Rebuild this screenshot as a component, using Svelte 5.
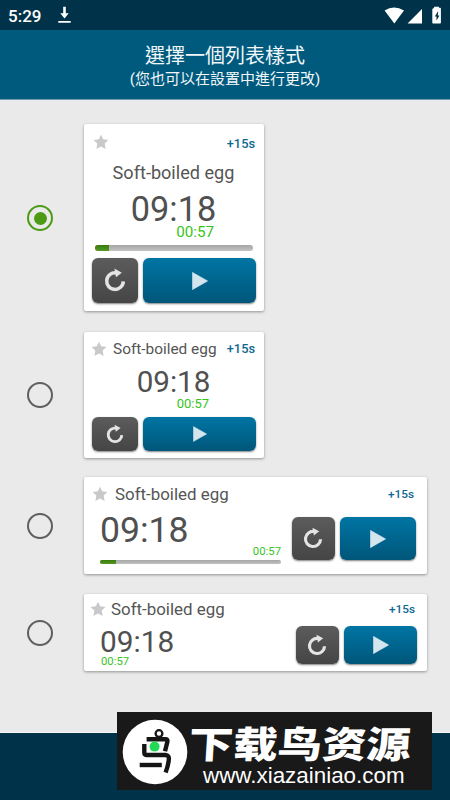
<script>
  let selected = $state(0);
  const styles = ['large', 'compact', 'wide', 'slim'];
</script>

{#snippet star()}
  <svg class="star" viewBox="0 0 16 16"><path d="M8 0.8 10.2 5.3 15.4 6 11.7 9.6 12.6 14.9 8 12.4 3.4 14.9 4.3 9.6 0.6 6 5.8 5.3Z" /></svg>
{/snippet}

{#snippet buttons()}
  <div class="buttons">
    <button class="reset" aria-label="Reset">
      <svg viewBox="0 0 22 24">
        <path d="M12.4 4.9A8.3 8.3 0 1 0 19.3 13.4" fill="none" stroke="#e4e4e4" stroke-width="3.5" />
        <path d="M10.4 0.6 17.8 4.7 12 9.2Z" fill="#e4e4e4" />
      </svg>
    </button>
    <button class="play" aria-label="Start">
      <svg viewBox="0 0 16 18"><path d="M0.4 0.3 15.7 9 0.4 17.7Z" fill="#d3e6ee" stroke="#d3e6ee" stroke-width=".5" /></svg>
    </button>
  </div>
{/snippet}

{#snippet progress()}
  <div class="progress"><i></i></div>
{/snippet}

<div class="screen">
  <div class="status">
    <span class="clock">5:29</span>
    <svg class="download" width="13" height="18" viewBox="0 0 13 18"><path d="M5.2 0.8h2.6v6.5h2.9L6.5 12.4 2.3 7.3h2.9zM0.3 14.9h12.4v1.8H0.3z" /></svg>
    <svg class="signals" width="60" height="20" viewBox="0 0 60 20">
      <path d="M0.6 4.6Q10 -1.4 20 4.6L10.3 17.4Z" />
      <path d="M38 3v14.6H23.6Z" />
      <path d="M49.3 2.5q0-.8.8-.8V0.8h4.8v.9h1.2q.8 0 .8.8v14.3q0 .8-.8.8h-7q-.8 0-.8-.8V3.3q0-.8 1-.8Z" />
      <path class="bolt" d="M54.2 5 50.8 10.4h1.7v4.2l3-5.2h-1.7z" />
    </svg>
  </div>

  <header>
    <h1>選擇一個列表樣式</h1>
    <p>(您也可以在設置中進行更改)</p>
  </header>

  <main>
    {#each styles as style, i}
      <div class="option {style}">
        <button class="radio" class:on={selected === i} aria-label={style} onclick={() => (selected = i)}></button>
        <div class="card">
          {#if style === 'large'}
            <div class="top">{@render star()}<span class="plus">+15s</span></div>
            <div class="name">Soft-boiled egg</div>
            <div class="time">09:18</div>
            <div class="remain">00:57</div>
            {@render progress()}
            {@render buttons()}
          {:else if style === 'compact'}
            <div class="top">{@render star()}<span class="name">Soft-boiled egg</span><span class="plus">+15s</span></div>
            <div class="time">09:18</div>
            <div class="remain">00:57</div>
            {@render buttons()}
          {:else}
            <div class="top">{@render star()}<span class="name">Soft-boiled egg</span><span class="plus">+15s</span></div>
            <div class="body">
              <div class="times">
                <div class="time">09:18</div>
                <div class="remain">00:57</div>
                {#if style === 'wide'}{@render progress()}{/if}
              </div>
              {@render buttons()}
            </div>
          {/if}
        </div>
      </div>
    {/each}
  </main>

  <footer></footer>

  <div class="mark">
    <svg width="66" height="66" viewBox="0 0 66 66">
      <circle cx="33" cy="33" r="32.3" fill="#fff" />
      <g fill="none" stroke="#151515" stroke-width="4.4">
        <path d="M24.6 20.3H43.5Q46 20.3 45.4 22.8L43 32.3" />
        <path d="M22.3 25V33.5Q22.3 36 25 36H43.5Q47.3 36.3 46.8 40.5Q46.4 46 43.6 53.5" />
        <path d="M17.7 46H39.8" />
        <circle cx="37" cy="14.6" r="3.4" stroke-width="2.3" />
      </g>
      <circle cx="32.6" cy="27.6" r="5" fill="#22d957" />
    </svg>
    <div class="words">
      <strong>下载鸟资源</strong>
      <span>www.xiazainiao.com</span>
    </div>
  </div>
</div>

<style>
  :global(body) { margin: 0; }
  .screen {
    position: relative;
    width: 450px;
    height: 800px;
    display: flex;
    flex-direction: column;
    overflow: hidden;
    background: #eaeaea;
    font-family: Roboto, "Noto Sans CJK TC", sans-serif;
    color: #555;
  }
  .status {
    height: 30px;
    box-sizing: border-box;
    padding: 0 7px 0 8px;
    display: flex;
    align-items: center;
    background: #003349;
    color: #fff;
  }
  .status svg { fill: #fff; }
  .clock { font-size: 17px; font-weight: 500; line-height: 30px; padding-top: 1px; }
  .download { margin: 0 auto 0 17px; }
  .signals { margin: 1px -1px 0 0; }
  .status .bolt { fill: #003349; }
  header {
    height: 70px;
    box-sizing: border-box;
    padding-top: 14px;
    text-align: center;
    background: #005a7e;
    border-bottom: 1px solid #6d9bad;
    color: #f2f7f9;
  }
  h1 { margin: 0; font-size: 20px; font-weight: 400; line-height: 24px; }
  header p { margin: 0; font-size: 15px; line-height: 23px; }
  main { flex: 1; padding-top: 24px; display: flex; flex-direction: column; align-items: flex-start; }
  .option { display: flex; align-items: center; padding-left: 27px; }
  button { border: 0; padding: 0; display: flex; align-items: center; justify-content: center; }
  .radio {
    width: 26px;
    height: 26px;
    flex: none;
    margin-right: 31px;
    border: 2.3px solid #5f5f5f;
    border-radius: 50%;
    background: none;
    box-sizing: border-box;
  }
  .radio.on { border-color: #4d9a14; margin-top: 1px; }
  .radio.on::after { content: ""; width: 13px; height: 13px; border-radius: 50%; background: #4d9a14; }
  .card {
    box-sizing: border-box;
    display: flex;
    flex-direction: column;
    background: #fff;
    border-radius: 2px;
    box-shadow: 0 1px 3px rgba(0, 0, 0, .38);
  }
  .top { display: flex; align-items: center; height: 20px; line-height: 20px; }
  .star { width: 16px; height: 16px; fill: #c9c9c9; flex: none; }
  .plus { color: #0d6790; margin-left: auto; font-weight: 500; white-space: nowrap; }
  .name { white-space: nowrap; }
  .time { color: #505050; }
  .remain { color: #38c31c; }
  .progress { border-radius: 3px; background: linear-gradient(#a5a5a5, #c2c2c2); overflow: hidden; flex: none; }
  .progress i { display: block; height: 100%; background: linear-gradient(#387b0c, #559a22); }
  .buttons { display: flex; }
  .reset, .play { border-radius: 6px; box-shadow: 0 1px 2px rgba(0, 0, 0, .5); }
  .reset { background: linear-gradient(#5c5c5c, #454545); }
  .play { background: linear-gradient(#0075a4, #005679); }
  .reset svg { width: 22px; height: 24px; margin: -1px 0 0 -1px; }
  .play svg { width: 16px; height: 18px; }

  .large .card { width: 180px; height: 187px; padding: 10px 8px 0; }
  .large .star { margin: -4px 0 0 1px; }
  .large .plus { font-size: 12.8px; margin-right: 1px; }
  .large .name { font-size: 18.1px; line-height: 24px; margin: 7px 1px 0 0; text-align: center; }
  .large .time { font-size: 34.3px; line-height: 32px; margin: 8px 1px 0 0; text-align: center; }
  .large .remain { font-size: 15.2px; line-height: 14px; margin: 0 42px 0 0; text-align: right; }
  .large .progress { height: 6px; margin: 6px 3px 0; }
  .large .progress i { width: 14px; }
  .large .buttons { margin-top: 7px; }
  .large .reset { width: 46px; height: 45px; margin-right: 5px; }
  .large .play { width: 113px; height: 45px; }

  .compact { margin-top: 21px; }
  .compact .card { width: 180px; height: 126px; padding: 7px 8px 0 7px; }
  .compact .name { font-size: 15.4px; margin-left: 6px; }
  .compact .plus { font-size: 12.8px; margin-top: -1px; margin-right: 1px; }
  .compact .time { font-size: 29.6px; line-height: 29px; margin: 9px 0 0 0; text-align: center; }
  .compact .remain { font-size: 13px; line-height: 14px; margin: 0 47px 0 0; text-align: right; }
  .compact .buttons { margin: 6px 0 0 1px; }
  .compact .reset { width: 46px; height: 34px; margin-right: 5px; }
  .compact .play { width: 113px; height: 34px; }
  .compact .reset svg { width: 18px; height: 20px; }
  .compact .play svg { width: 14px; height: 16px; }

  .wide { margin-top: 19px; }
  .wide .card { width: 343px; height: 97px; padding: 7px 11px 0 8px; }
  .wide .name { font-size: 16.9px; margin-left: 7px; }
  .wide .plus { font-size: 11.8px; margin-right: 2px; }
  .body { display: flex; justify-content: space-between; }
  .wide .times { width: 181px; margin-left: 8px; }
  .wide .time { font-size: 35.6px; line-height: 34px; margin: 9px 0 0 0; }
  .wide .remain { font-size: 11.3px; line-height: 13px; margin-top: -2px; text-align: right; }
  .wide .progress { height: 4px; margin-top: 2px; }
  .wide .progress i { width: 16px; }
  .wide .buttons { margin-top: 13px; }
  .wide .reset { width: 43px; height: 43px; margin-right: 5px; }
  .wide .play { width: 76px; height: 43px; }

  .slim { margin-top: 20px; }
  .slim .card { width: 343px; height: 77px; padding: 5px 11px 0 6px; }
  .slim .name { font-size: 16.9px; margin-left: 5px; }
  .slim .plus { font-size: 11.8px; margin-right: 1px; }
  .slim .times { margin-left: 10px; }
  .slim .time { font-size: 29.8px; line-height: 27px; margin-top: 9px; }
  .slim .remain { font-size: 11.3px; line-height: 13px; margin-top: 0; padding-left: 1px; }
  .slim .buttons { margin-top: 7px; margin-right: -1px; }
  .slim .reset { width: 43px; height: 38px; margin-right: 5px; }
  .slim .play { width: 73px; height: 38px; }
  .wide .reset svg, .slim .reset svg { width: 20px; height: 22px; }

  footer { height: 67px; background: #003349; border-top: 1px solid #f8f8f8; }

  .mark {
    position: absolute;
    left: 117px;
    top: 712px;
    width: 315px;
    height: 78px;
    display: flex;
    background: #191919;
    color: #fff;
    overflow: hidden;
  }
  .mark svg { flex: none; margin: 7px 0 0 5px; }
  .words { margin-left: 1px; display: flex; flex-direction: column; white-space: nowrap; }
  .words strong {
    font: 900 37px/40px "Noto Sans CJK SC", sans-serif;
    margin-top: 10px;
    width: 185px;
    transform: scaleX(1.2) skewX(-3deg);
    transform-origin: 0 50%;
  }
  .words span {
    font: 22.4px/24px "Liberation Sans", sans-serif;
    margin: 2px 0 0 14px;
  }
</style>
